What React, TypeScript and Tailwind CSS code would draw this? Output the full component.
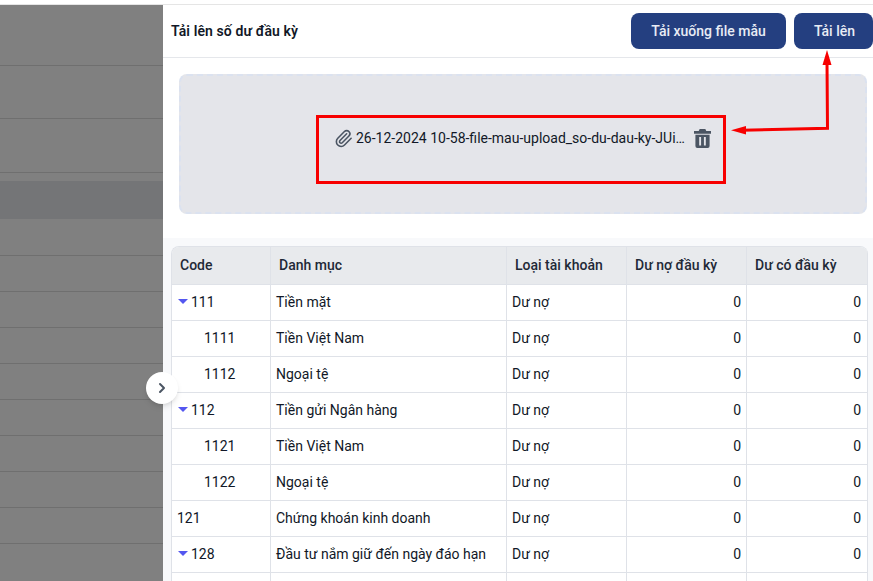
import { ChevronRight, Paperclip } from "lucide-react";

const sidebarRows = ["h-[61px]", "h-[53px]", "h-[54px]"];
const lowerRows = [37, 36, 36, 36, 36, 36, 36, 36, 36];

type Row = { code: string; name: string; level: 0 | 1; open?: boolean };

const rows: Row[] = [
  { code: "111", name: "Tiền mặt", level: 0, open: true },
  { code: "1111", name: "Tiền Việt Nam", level: 1 },
  { code: "1112", name: "Ngoại tệ", level: 1 },
  { code: "112", name: "Tiền gửi Ngân hàng", level: 0, open: true },
  { code: "1121", name: "Tiền Việt Nam", level: 1 },
  { code: "1122", name: "Ngoại tệ", level: 1 },
  { code: "121", name: "Chứng khoán kinh doanh", level: 0 },
  { code: "128", name: "Đầu tư nắm giữ đến ngày đáo hạn", level: 0, open: true },
];

const headers = ["Code", "Danh mục", "Loại tài khoản", "Dư nợ đầu kỳ", "Dư có đầu kỳ"];

const Sidebar = () => (
  <aside className="w-[163px] shrink-0 bg-[#808080]">
    {sidebarRows.map((h, i) => (
      <div key={i} className={`${h} border-b border-[#6f6f6f]`} />
    ))}
    <div className="h-2" />
    <div className="h-[38px] bg-[#747577]" />
    {lowerRows.map((h, i) => (
      <div key={i} style={{ height: h }} className="border-b border-[#6f6f6f]" />
    ))}
  </aside>
);

const TrashIcon = () => (
  <svg viewBox="0 0 18 20" className="h-[19px] w-[17px] fill-[#4b5563]">
    <path d="M6 0h6l1 2h5v3H0V2h5z" />
    <path
      fillRule="evenodd"
      d="M1.500 6h15v12a2 2 0 0 1-2 2h-11a2 2 0 0 1-2-2zM5.500 8.500v9h2v-9zm5 0v9h2v-9z"
    />
  </svg>
);

const UploadBox = () => (
  <div className="mt-4 mr-[6px] ml-4 h-[140px] rounded-lg border-2 border-dashed border-[#dbe2f0] bg-[#e4e5ea] pt-[39px] pl-[135px]">
    <div className="h-[69px] w-[410px] border-[3px] border-[#f70000]">
      <div className="flex h-[34px] items-center pt-[6px] pl-[15px]">
        <Paperclip size={19} strokeWidth={2} className="shrink-0 text-[#4b5563]" />
        <span className="ml-[3px] w-[332px] truncate text-sm text-[#111827]">
          26-12-2024 10-58-file-mau-upload_so-du-dau-ky-JUiWpVqk.xlsx
        </span>
        <span className="ml-[6px]">
          <TrashIcon />
        </span>
      </div>
    </div>
  </div>
);

const CodeCell = ({ row }: { row: Row }) => {
  if (row.level === 1) return <span className="pl-[27px]">{row.code}</span>;
  if (!row.open) return <span>{row.code}</span>;
  return (
    <span className="flex items-center">
      <span className="mr-[3px] ml-px h-0 w-0 border-x-[5px] border-t-[5px] border-x-transparent border-t-[#5457f0]" />
      {row.code}
    </span>
  );
};

const AccountTable = () => (
  <div className="mt-6 bg-[#f8f9fb] pt-2 pr-[6px] pl-2">
    <table className="w-[696px] table-fixed border-separate border-spacing-0 overflow-hidden rounded-t-lg border-t border-l border-[#dfe2e8] text-sm text-[#111827]">
      <colgroup>
        <col className="w-[99px]" />
        <col className="w-[236px]" />
        <col className="w-[120px]" />
        <col className="w-[120px]" />
        <col className="w-[121px]" />
      </colgroup>
      <thead>
        <tr className="h-[38px] bg-[#e8eaed]">
          {headers.map((h) => (
            <th
              key={h}
              className="border-r border-b border-[#dfe2e8] pb-[2px] pl-2 text-left font-medium text-[#1f2937]"
            >
              {h}
            </th>
          ))}
        </tr>
      </thead>
      <tbody className="bg-white">
        {rows.map((row) => (
          <tr key={row.code} className="h-9">
            <td className="border-r border-b border-[#dfe2e8] pb-[2px] pl-[5px]">
              <CodeCell row={row} />
            </td>
            <td className="truncate border-r border-b border-[#dfe2e8] pb-[2px] pl-[5px]">{row.name}</td>
            <td className="border-r border-b border-[#dfe2e8] pb-[2px] pl-[5px]">Dư nợ</td>
            <td className="border-r border-b border-[#dfe2e8] pr-[5px] pb-[2px] text-right">0</td>
            <td className="border-r border-b border-[#dfe2e8] pr-[6px] pb-[2px] text-right">0</td>
          </tr>
        ))}
        <tr className="h-9">
          <td className="border-r border-[#dfe2e8]" />
          <td className="border-r border-[#dfe2e8]" />
          <td className="border-r border-[#dfe2e8]" />
          <td className="border-r border-[#dfe2e8]" />
          <td className="border-r border-[#dfe2e8]" />
        </tr>
      </tbody>
    </table>
  </div>
);

const App = () => (
  <div
    className="relative h-[581px] w-[873px] overflow-hidden bg-white"
    style={{ fontFamily: "Roboto, sans-serif" }}
  >
    <div className="h-[5px] border-b border-[#e5e5e5]" />
    <div className="flex h-[576px]">
      <Sidebar />
      <main className="min-w-0 flex-1">
        <header className="flex h-[53px] items-center justify-between border-b border-[#e5e7eb] pl-2">
          <h1 className="text-sm font-semibold tracking-[0.1px] text-[#111827]">Tải lên số dư đầu kỳ</h1>
          <div className="flex gap-2">
            <button className="h-9 w-[155px] rounded-lg bg-[#243f80] text-sm font-medium text-[#e8ecf5]">
              Tải xuống file mẫu
            </button>
            <button className="h-9 w-[79px] rounded-lg bg-[#243f80] pl-[2px] text-sm font-medium text-[#e8ecf5]">
              Tải lên
            </button>
          </div>
        </header>
        <UploadBox />
        <AccountTable />
      </main>
    </div>

    {/* nut thu gon sidebar */}
    <button className="absolute top-[372px] left-[146px] flex h-8 w-8 items-center justify-center rounded-full bg-white shadow-md">
      <ChevronRight size={16} strokeWidth={3} className="text-[#4b5563]" />
    </button>

    {/* mui ten chu thich */}
    <svg className="pointer-events-none absolute top-0 left-0" width="873" height="581">
      <path d="M827 62L827.500 128.300L742 130.300" fill="none" stroke="#f70000" strokeWidth="3" />
      <path d="M827 50L822.500 65H831.500Z" fill="#f70000" />
      <path d="M731 130.300L746 126V134.500Z" fill="#f70000" />
    </svg>
  </div>
);

export default App;
